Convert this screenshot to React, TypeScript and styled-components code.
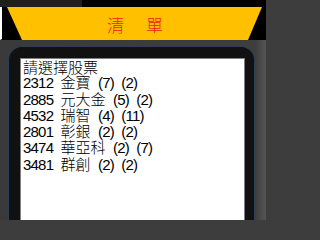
import React from "react";
import styled, { createGlobalStyle } from "styled-components";

const stocks = [
  { code: "2312", name: "金寶", a: 7, b: 2 },
  { code: "2885", name: "元大金", a: 5, b: 2 },
  { code: "4532", name: "瑞智", a: 4, b: 11 },
  { code: "2801", name: "彰銀", a: 2, b: 2 },
  { code: "3474", name: "華亞科", a: 2, b: 7 },
  { code: "3481", name: "群創", a: 2, b: 2 },
];

function App() {
  return (
    <Screen>
      <GlobalStyle />
      <TopStrip />
      <TitleBar>
        <Banner>
          <span>清</span>
          <span>單</span>
        </Banner>
      </TitleBar>
      <Body>
        <Panel>
          <ListBox>
            <Prompt>請選擇股票</Prompt>
            {stocks.map((s) => (
              <Line key={s.code}>
                {s.code} <Name>{s.name}</Name> ({s.a}) ({s.b})
              </Line>
            ))}
          </ListBox>
        </Panel>
      </Body>
    </Screen>
  );
}

const GlobalStyle = createGlobalStyle`
  html, body {
    margin: 0;
    padding: 0;
    background: #3d3d3d;
  }
`;

const Screen = styled.div`
  width: 266px;
  height: 220px;
  overflow: hidden;
  display: flex;
  flex-direction: column;
  background: linear-gradient(to right, #3a3a3a 0, #3e3e3e 96%, #555 100%);
`;

const TopStrip = styled.div`
  height: 7px;
  background: linear-gradient(to right, #1f1f1f 0 82px, #000 82px);
`;

const TitleBar = styled.div`
  height: 32px;
  background: #000;
  border-left: 2px solid #fff;
  border-bottom: 1px solid #000;
`;

const Banner = styled.div`
  height: 100%;
  background: #ffc000;
  clip-path: polygon(5px 0, 260px 0, 246px 100%, 20px 100%);
  display: flex;
  justify-content: center;
  align-items: center;
  gap: 22px;
  padding: 1px 0 0 2px;
  color: #f0220c;
  font-family: "Noto Sans CJK TC", sans-serif;
  font-size: 17px;
  font-weight: 300;
  line-height: 1;
`;

const Body = styled.div`
  flex: 1;
  padding: 6px 11px 0 8px;
  display: flex;
  min-height: 0;
`;

const Panel = styled.div`
  flex: 1;
  background: #111;
  border: 1px solid #2c3e55;
  border-bottom: none;
  border-radius: 14px 14px 0 0;
  padding: 11px 9px 0 11px;
  display: flex;
`;

const ListBox = styled.div`
  flex: 1;
  background: #fff;
  border: 1px solid #808080;
  border-bottom: none;
  padding: 0 2px;
`;

const Line = styled.div`
  font-family: "Liberation Sans", "Noto Sans CJK TC", sans-serif;
  font-size: 15px;
  font-weight: 300;
  line-height: 15.3px;
  letter-spacing: -0.8px;
  word-spacing: 4px;
  color: #000;
  white-space: pre;
`;

const Prompt = styled(Line)`
  font-family: "Noto Sans CJK TC", sans-serif;
  letter-spacing: 0;
`;

const Name = styled.span`
  font-family: "Noto Sans CJK TC", sans-serif;
  letter-spacing: 0;
`;

export default App;
